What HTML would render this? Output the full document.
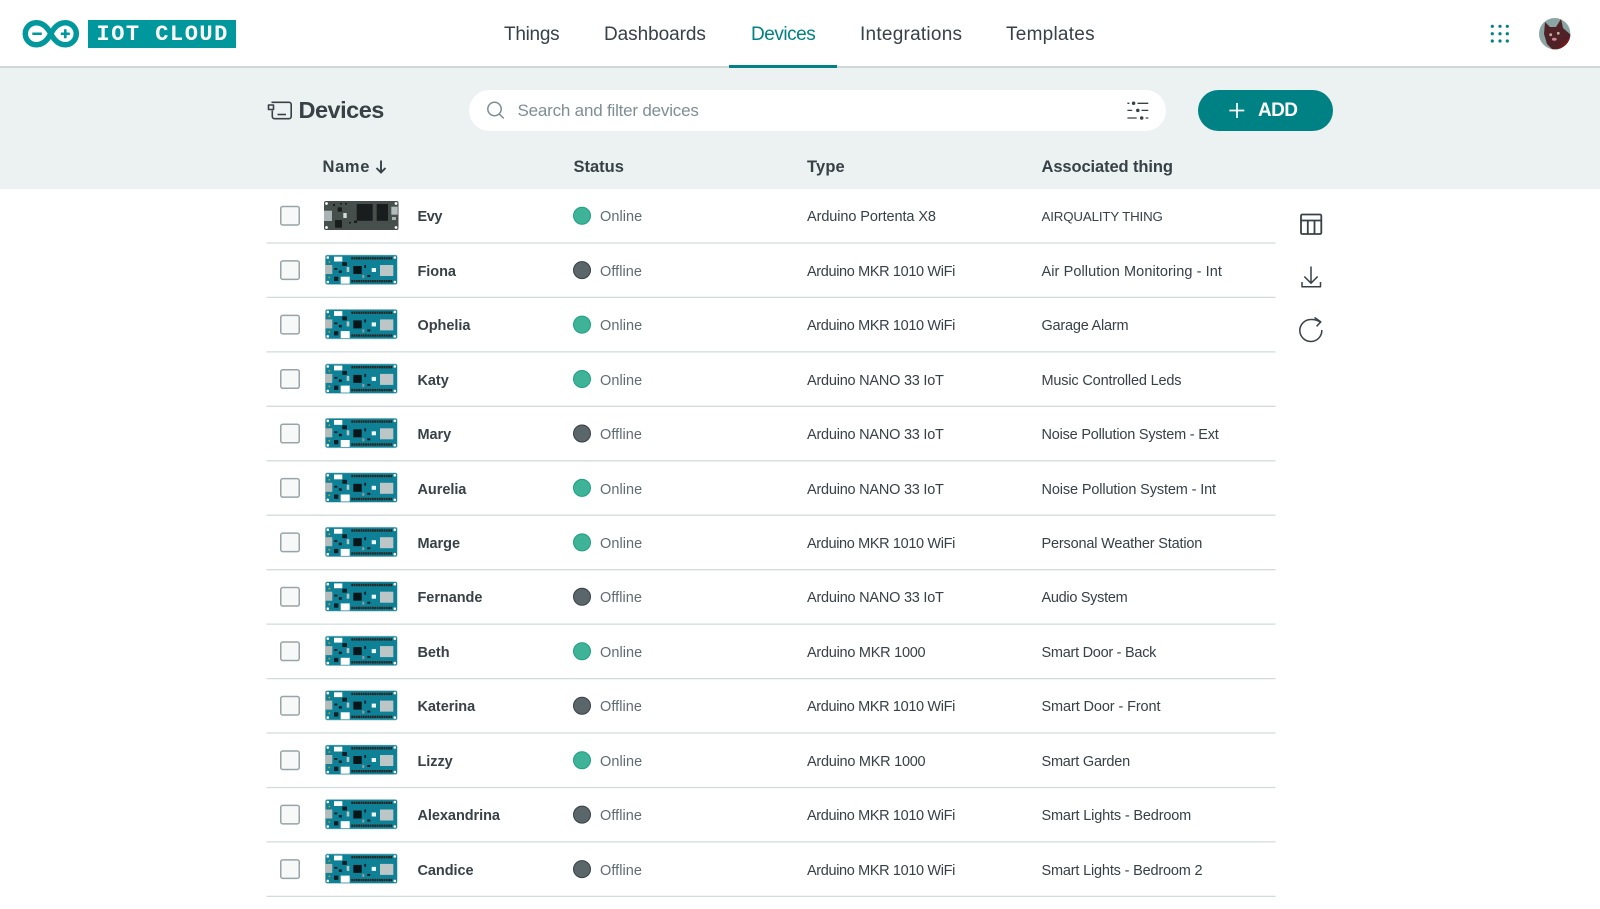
<!DOCTYPE html>
<html><head><meta charset="utf-8"><title>Devices</title>
<style>
html,body{margin:0;padding:0;background:#fff}
#p{position:relative;width:1600px;height:909px;overflow:hidden;background:#fff;font-family:"Liberation Sans",sans-serif;color:#374146}
#bar{position:absolute;left:0;top:67px;width:1600px;height:122px;background:#ecf1f1}
#hl{position:absolute;left:0;top:66px;width:1600px;height:2px;background:#cfd8d9}
svg{position:absolute;left:0;top:0}
.t{position:absolute;white-space:nowrap;line-height:20px}
.nav{font-size:19px;top:25px;color:#374146;letter-spacing:.25px}
.h{font-size:16.5px;font-weight:bold;top:157px;color:#374146;letter-spacing:.15px}
.n{font-size:14.5px;font-weight:bold;left:417.5px;color:#374146;letter-spacing:-.05px}
.s{font-size:14.5px;left:600px;color:#5f6d72;letter-spacing:.05px}
.y{font-size:14.5px;left:807px;color:#374146;letter-spacing:-.36px}
.y.n3{letter-spacing:-.23px}.y.m0{letter-spacing:-.26px}
.a{font-size:14.5px;left:1041.5px;color:#374146;letter-spacing:-.18px}
</style></head><body><div id="p">
<div id="bar"></div><div id="hl"></div>
<div style="position:absolute;left:469px;top:90px;width:697px;height:41px;border-radius:21px;background:#fff"></div>
<div style="position:absolute;left:1198px;top:90px;width:135px;height:41px;border-radius:21px;background:#008184"></div>
<div style="position:absolute;left:729px;top:64.5px;width:108px;height:3px;background:#008184"></div>
<div style="position:absolute;left:88px;top:20px;width:148px;height:28px;background:#00979d"></div>

<svg width="1600" height="909" viewBox="0 0 1600 909" fill="none">
<defs>
<clipPath id="av"><circle cx="1554.7" cy="33.7" r="15.7"/></clipPath>
<symbol id="g" viewBox="0 0 72 29.5" overflow="visible">
<rect x="0" y="0" width="72" height="29.5" rx="2" fill="#0f8197" stroke="#a9cbd1" stroke-width=".6"/>
<rect x="8.700" y="1.700" width="8.300" height="4.800" fill="#fff"/>
<rect x="15.400" y="21.700" width="9" height="7" fill="#fff"/>
<rect x=".2" y="10" width="6.800" height="9" fill="#b4bcbc"/>
<rect x="54.700" y="10" width="13.300" height="11" fill="#bcc6c6"/>
<rect x="28" y="11" width="8.400" height="8" fill="#08161a"/>
<rect x="17" y="7" width="4.700" height="4" fill="#0a1f25"/>
<rect x="46.400" y="13" width="4.300" height="4" fill="#eef6f6"/>
<rect x="21.400" y="12" width="2.600" height="5" fill="#b7c8c8"/>
<rect x="8.700" y="21.700" width="4.300" height="4.300" fill="#0a1f25"/>
<rect x="9" y="13" width="3" height="1.800" fill="#0a1f25"/>
<rect x="13.500" y="15.500" width="3" height="2.500" fill="#0a1f25"/>
<rect x="39" y="10" width="1.800" height="3" fill="#0a1f25"/>
<rect x="42" y="20" width="3" height="2" fill="#0a1f25"/>
<rect x="37" y="20" width="2" height="3" fill="#8ea0a0"/>
<path d="M26 3.300H67M26 26.200H67" stroke="#2a2521" stroke-width="2.400" stroke-dasharray="1.800 .5"/>
<circle cx="2.500" cy="2.500" r="1.300" fill="#fff"/><circle cx="69.500" cy="2.500" r="1.300" fill="#fff"/>
<circle cx="2.500" cy="27" r="1.300" fill="#fff"/><circle cx="69.500" cy="27" r="1.300" fill="#fff"/>
<circle cx="4" cy="7" r=".9" fill="#c8a030"/><circle cx="4" cy="22.500" r=".9" fill="#c8a030"/>
</symbol>
<symbol id="cb" viewBox="0 0 20 20" overflow="visible">
<rect x=".75" y=".75" width="18.5" height="18.5" rx="2" fill="#f7f9f9" stroke="#98a4a6" stroke-width="1.5"/>
</symbol>
</defs>

<!-- logo -->
<g transform="translate(22.3,20)">
<path d="M28.500 13.750C25 7 20.500 2.750 14 2.750a11 11 0 0 0 0 22c6.500 0 11-4.250 14.500-11S36.500 2.750 43 2.750a11 11 0 0 1 0 22c-6.500 0-11-4.250-14.500-11z" stroke="#00979d" stroke-width="5.500"/>
<path d="M10 13.750h9.500M38.500 13.750h9M43 9.300v9" stroke="#00979d" stroke-width="2.600"/>
</g>

<!-- grid -->
<g fill="#008184">
<circle cx="1492.300" cy="26.300" r="1.600"/><circle cx="1500" cy="26.300" r="1.600"/><circle cx="1507.300" cy="26.300" r="1.600"/>
<circle cx="1492.300" cy="33.700" r="1.600"/><circle cx="1500" cy="33.700" r="1.600"/><circle cx="1507.300" cy="33.700" r="1.600"/>
<circle cx="1492.300" cy="41" r="1.600"/><circle cx="1500" cy="41" r="1.600"/><circle cx="1507.300" cy="41" r="1.600"/>
</g>

<!-- avatar -->
<g clip-path="url(#av)">
<rect x="1538" y="17" width="34" height="34" fill="#8ba5a5"/>
<path d="M1545 22L1550 27H1556L1561 19L1563 28L1571 35V50H1553L1547 44L1544 34Z" fill="#4e2226"/>
<path d="M1563 42L1571 36V50H1556Z" fill="#6d1a1e"/>
<circle cx="1550.700" cy="34.700" r="1.400" fill="#c8b0a0"/><circle cx="1558.300" cy="33.300" r="1.400" fill="#c8b0a0"/>
<ellipse cx="1554.300" cy="39.300" rx="2.400" ry="1.500" fill="#d08a98"/>
</g>

<!-- devices icon -->
<g stroke="#374146" stroke-width="1.600" stroke-linejoin="round">
<path d="M271.500 102.300h17.500a2.200 2.200 0 0 1 2.200 2.200v12a2.200 2.200 0 0 1-2.200 2.200h-14.500a2.200 2.200 0 0 1-2.200-2.200v-6"/>
<rect x="268.500" y="105" width="5" height="4.500" fill="#ecf1f1"/>
<path d="M277.500 114.500h8.500"/>
</g>

<!-- search -->
<g stroke="#7b8d8f" stroke-width="1.500"><circle cx="494.500" cy="109" r="6.700"/><path d="M499.300 114l4 4" stroke-linecap="round"/></g>

<!-- filter -->
<g stroke="#374146" stroke-width="1.300" fill="#374146">
<path d="M1127.400 103.300h2M1137.500 103.300h10.800M1127.400 110.400h4.800M1141.500 110.400h6.800M1127.400 118h9.300M1145.700 118h2.600"/>
<circle cx="1133.600" cy="103.300" r="1.100"/><circle cx="1137.800" cy="110.400" r="1.100"/><circle cx="1141.700" cy="118" r="1.100"/>
</g>

<!-- plus -->
<path d="M1237 103v15M1229.300 110.500h15" stroke="#fff" stroke-width="1.700"/>

<!-- side -->
<g stroke="#374146" stroke-width="1.800" stroke-linejoin="round">
<rect x="1301" y="214.500" width="20.300" height="19.500" rx="1.300"/>
<path d="M1301 220.500h20.300M1307.800 220.500v13.500M1314.500 220.500v13.500"/>
</g>
<g stroke="#374146" stroke-width="1.500" stroke-linejoin="round">
<path d="M1311 266.500v16.500M1304.300 276.500l6.700 6.700 6.700-6.700M1302 282v4.700h18.500v-4.700"/>
<path d="M1321.800 330a11 11 0 1 1-11-10.500c3.500-.2 6.700.7 9.500 2.600"/>
<path d="M1314.500 317.500l6.300 4.400-4.200 4.400"/>
</g>

<!-- rows -->
<g stroke="#d2dcdc" stroke-width="1.300">
<path d="M266.500 243h1009M266.500 297.400h1009M266.500 351.900h1009M266.500 406.300h1009M266.500 460.800h1009M266.500 515.200h1009M266.500 569.700h1009M266.500 624.100h1009M266.500 678.600h1009M266.500 733h1009M266.500 787.500h1009M266.500 841.900h1009M266.500 896.400h1009"/>
</g>

<use href="#cb" x="280" y="205.700" width="20" height="20"/>
<use href="#cb" x="280" y="260.100" width="20" height="20"/>
<use href="#cb" x="280" y="314.600" width="20" height="20"/>
<use href="#cb" x="280" y="369" width="20" height="20"/>
<use href="#cb" x="280" y="423.500" width="20" height="20"/>
<use href="#cb" x="280" y="477.900" width="20" height="20"/>
<use href="#cb" x="280" y="532.400" width="20" height="20"/>
<use href="#cb" x="280" y="586.800" width="20" height="20"/>
<use href="#cb" x="280" y="641.300" width="20" height="20"/>
<use href="#cb" x="280" y="695.700" width="20" height="20"/>
<use href="#cb" x="280" y="750.200" width="20" height="20"/>
<use href="#cb" x="280" y="804.600" width="20" height="20"/>
<use href="#cb" x="280" y="859.100" width="20" height="20"/>

<!-- Evy board -->
<g transform="translate(324,201)">
<rect width="74.500" height="29" rx="2" fill="#464f4c"/>
<rect x="32.700" y="3" width="16" height="16.800" fill="#191d1e"/>
<rect x="52.700" y="3" width="11.300" height="16.800" fill="#191d1e"/>
<rect x="0" y="9.700" width="8" height="10.300" fill="#aab3b3"/>
<rect x="67.300" y="5.700" width="6.400" height="8" fill="#b3bcbc"/>
<rect x="68" y="16" width="4" height="3" fill="#aab3b3"/>
<rect x="11" y="19" width="7" height="7.700" fill="#191d1e"/>
<rect x="19.300" y="12" width="3.400" height="5" fill="#d5dcdc"/>
<rect x="13.700" y="6.300" width="4.300" height="4.400" fill="#191d1e"/>
<rect x="30" y="19.500" width="3" height="2.500" fill="#191d1e"/>
<rect x="25" y="21" width="2" height="1.500" fill="#191d1e"/>
<rect x="9" y="3" width="2" height="2" fill="#191d1e"/><rect x="16" y="2" width="2" height="1.500" fill="#191d1e"/><rect x="21" y="2" width="2" height="1.500" fill="#191d1e"/>
<circle cx="2.500" cy="2.500" r="1.400" fill="#fff"/><circle cx="72" cy="2.500" r="1.400" fill="#fff"/><circle cx="2.500" cy="26.500" r="1.400" fill="#fff"/><circle cx="72" cy="26.500" r="1.400" fill="#fff"/>
</g>
<use href="#g" x="325.300" y="255" width="72" height="29.500"/>
<use href="#g" x="325.300" y="309.400" width="72" height="29.500"/>
<use href="#g" x="325.300" y="363.900" width="72" height="29.500"/>
<use href="#g" x="325.300" y="418.300" width="72" height="29.500"/>
<use href="#g" x="325.300" y="472.800" width="72" height="29.500"/>
<use href="#g" x="325.300" y="527.200" width="72" height="29.500"/>
<use href="#g" x="325.300" y="581.700" width="72" height="29.500"/>
<use href="#g" x="325.300" y="636.100" width="72" height="29.500"/>
<use href="#g" x="325.300" y="690.600" width="72" height="29.500"/>
<use href="#g" x="325.300" y="745" width="72" height="29.500"/>
<use href="#g" x="325.300" y="799.500" width="72" height="29.500"/>
<use href="#g" x="325.300" y="853.900" width="72" height="29.500"/>

<g stroke-width="1">
<circle cx="582" cy="215.700" r="8.500" fill="#3fb398" stroke="#1da086"/>
<circle cx="582" cy="270.100" r="8.500" fill="#5a666a" stroke="#374146"/>
<circle cx="582" cy="324.600" r="8.500" fill="#3fb398" stroke="#1da086"/>
<circle cx="582" cy="379" r="8.500" fill="#3fb398" stroke="#1da086"/>
<circle cx="582" cy="433.500" r="8.500" fill="#5a666a" stroke="#374146"/>
<circle cx="582" cy="487.900" r="8.500" fill="#3fb398" stroke="#1da086"/>
<circle cx="582" cy="542.400" r="8.500" fill="#3fb398" stroke="#1da086"/>
<circle cx="582" cy="596.800" r="8.500" fill="#5a666a" stroke="#374146"/>
<circle cx="582" cy="651.300" r="8.500" fill="#3fb398" stroke="#1da086"/>
<circle cx="582" cy="705.700" r="8.500" fill="#5a666a" stroke="#374146"/>
<circle cx="582" cy="760.200" r="8.500" fill="#3fb398" stroke="#1da086"/>
<circle cx="582" cy="814.600" r="8.500" fill="#5a666a" stroke="#374146"/>
<circle cx="582" cy="869.100" r="8.500" fill="#5a666a" stroke="#374146"/>
</g>

<path d="M381 160.500v12M376.500 168l4.500 4.500 4.500-4.500" stroke="#374146" stroke-width="1.900"/>
</svg>

<div class="t" style="left:96.500px;top:25px;font-family:'Liberation Mono',monospace;font-weight:bold;font-size:22px;color:#fff;letter-spacing:1.500px">IOT CLOUD</div>

<div class="t nav" style="left:504px;letter-spacing:-.28px">Things</div>
<div class="t nav" style="left:604px;letter-spacing:-.06px">Dashboards</div>
<div class="t nav" style="left:751px;color:#008184;letter-spacing:-.47px">Devices</div>
<div class="t nav" style="left:860px">Integrations</div>
<div class="t nav" style="left:1006px">Templates</div>

<div class="t" style="left:298.500px;top:100px;font-size:23.500px;font-weight:bold;color:#374146;letter-spacing:-.5px">Devices</div>
<div class="t" style="left:517.500px;top:100.500px;font-size:17px;color:#7f8f91;letter-spacing:-.2px">Search and filter devices</div>
<div class="t" style="left:1258px;top:101px;font-size:19px;font-weight:bold;color:#fff;letter-spacing:-.6px">ADD</div>

<div class="t h" style="left:322.500px;letter-spacing:.65px">Name</div>
<div class="t h" style="left:573.500px;letter-spacing:0">Status</div>
<div class="t h" style="left:807px">Type</div>
<div class="t h" style="left:1041.500px;letter-spacing:-.1px">Associated thing</div>

<div class="t n" style="top:207.200px;letter-spacing:-.4px">Evy</div><div class="t s" style="top:207.200px">Online</div><div class="t y" style="top:207.200px;letter-spacing:-.09px">Arduino Portenta X8</div><div class="t a" style="top:207.200px;font-size:13.300px;letter-spacing:-.15px">AIRQUALITY THING</div>
<div class="t n" style="top:261.700px">Fiona</div><div class="t s" style="top:261.700px">Offline</div><div class="t y" style="top:261.700px">Arduino MKR 1010 WiFi</div><div class="t a" style="top:261.700px;letter-spacing:.08px">Air Pollution Monitoring - Int</div>
<div class="t n" style="top:316.100px">Ophelia</div><div class="t s" style="top:316.100px">Online</div><div class="t y" style="top:316.100px">Arduino MKR 1010 WiFi</div><div class="t a" style="top:316.100px;letter-spacing:-.22px">Garage Alarm</div>
<div class="t n" style="top:370.600px">Katy</div><div class="t s" style="top:370.600px">Online</div><div class="t y n3" style="top:370.600px">Arduino NANO 33 IoT</div><div class="t a" style="top:370.600px;letter-spacing:-.17px">Music Controlled Leds</div>
<div class="t n" style="top:425px">Mary</div><div class="t s" style="top:425px">Offline</div><div class="t y n3" style="top:425px">Arduino NANO 33 IoT</div><div class="t a" style="top:425px;letter-spacing:-.21px">Noise Pollution System - Ext</div>
<div class="t n" style="top:479.500px">Aurelia</div><div class="t s" style="top:479.500px">Online</div><div class="t y n3" style="top:479.500px">Arduino NANO 33 IoT</div><div class="t a" style="top:479.500px;letter-spacing:-.13px">Noise Pollution System - Int</div>
<div class="t n" style="top:533.900px">Marge</div><div class="t s" style="top:533.900px">Online</div><div class="t y" style="top:533.900px">Arduino MKR 1010 WiFi</div><div class="t a" style="top:533.900px">Personal Weather Station</div>
<div class="t n" style="top:588.400px">Fernande</div><div class="t s" style="top:588.400px">Offline</div><div class="t y n3" style="top:588.400px">Arduino NANO 33 IoT</div><div class="t a" style="top:588.400px;letter-spacing:-.3px">Audio System</div>
<div class="t n" style="top:642.800px">Beth</div><div class="t s" style="top:642.800px">Online</div><div class="t y m0" style="top:642.800px">Arduino MKR 1000</div><div class="t a" style="top:642.800px;letter-spacing:-.27px">Smart Door - Back</div>
<div class="t n" style="top:697.300px">Katerina</div><div class="t s" style="top:697.300px">Offline</div><div class="t y" style="top:697.300px">Arduino MKR 1010 WiFi</div><div class="t a" style="top:697.300px;letter-spacing:-.11px">Smart Door - Front</div>
<div class="t n" style="top:751.700px">Lizzy</div><div class="t s" style="top:751.700px">Online</div><div class="t y m0" style="top:751.700px">Arduino MKR 1000</div><div class="t a" style="top:751.700px;letter-spacing:-.22px">Smart Garden</div>
<div class="t n" style="top:806.200px">Alexandrina</div><div class="t s" style="top:806.200px">Offline</div><div class="t y" style="top:806.200px">Arduino MKR 1010 WiFi</div><div class="t a" style="top:806.200px;letter-spacing:-.16px">Smart Lights - Bedroom</div>
<div class="t n" style="top:860.600px">Candice</div><div class="t s" style="top:860.600px">Offline</div><div class="t y" style="top:860.600px">Arduino MKR 1010 WiFi</div><div class="t a" style="top:860.600px">Smart Lights - Bedroom 2</div>
</div></body></html>
